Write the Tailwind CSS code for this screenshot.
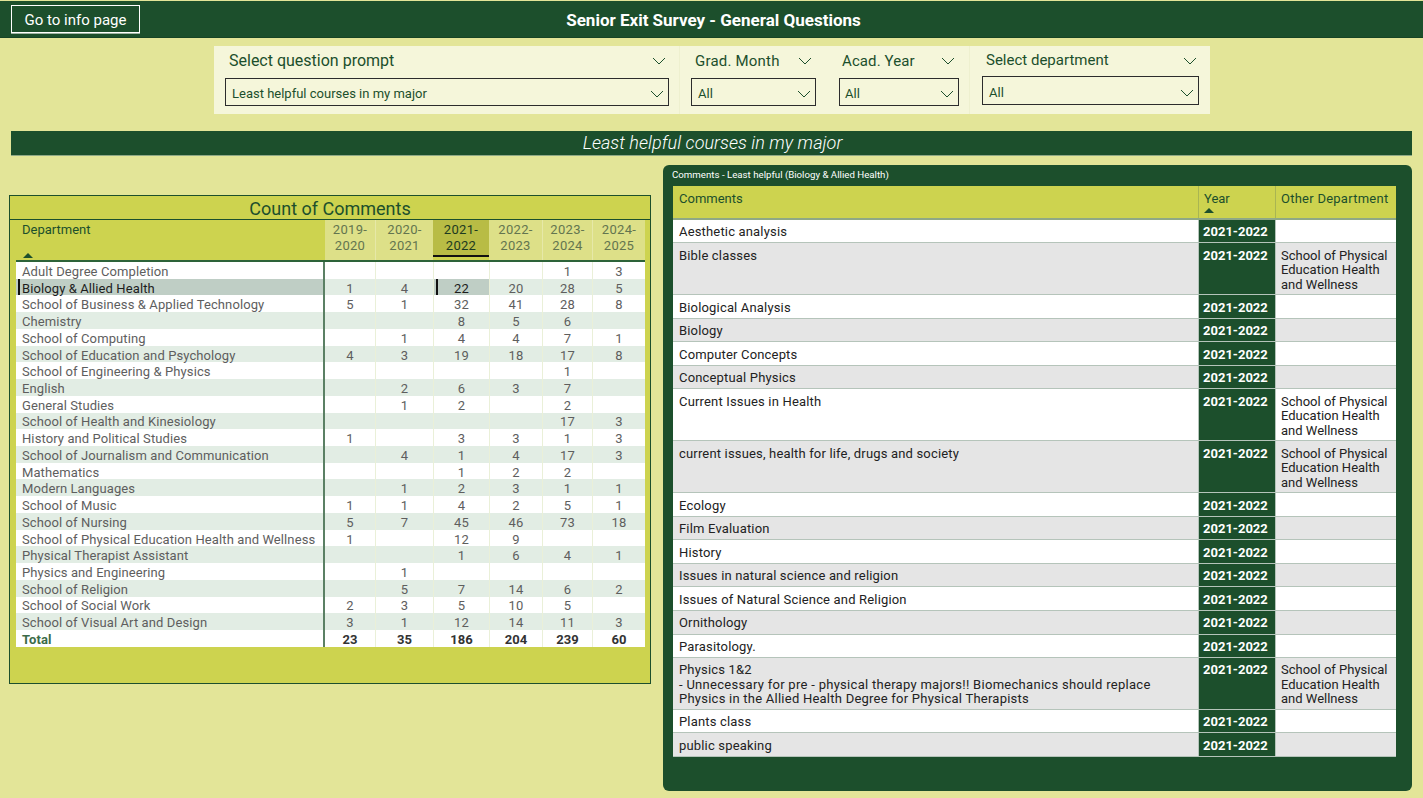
<!DOCTYPE html>
<html lang="en">
  <head>
    <meta charset="UTF-8" />
    <title>Senior Exit Survey</title>
    <script src="https://cdn.jsdelivr.net/npm/@tailwindcss/browser@4"></script>
  </head>
  <body class="h-[798px] overflow-hidden bg-[#e3e598] font-['Roboto',sans-serif] pt-px">
    <!-- Header -->
    <header class="flex h-[37px] items-center bg-[#1c4f2c] border-b border-[#174425]">
      <button class="ml-[11px] h-[28px] w-[129px] border border-white pt-[2px] text-[15px] text-white shadow-[0_1px_0_#9fb5a5]">Go to info page</button>
      <h1 class="flex-1 pr-[136px] pt-[3px] text-center text-[17px] font-bold text-white">Senior Exit Survey - General Questions</h1>
    </header>

    <!-- Slicers -->
    <section class="ml-[214px] mt-[8px] flex h-[68px] w-[996px] bg-[#f5f6da] text-[#1c4f2c]">
      <div class="w-[466px] border-r border-[#eef0cf] pl-[11px] pr-[10px] pt-[7px]">
        <div class="flex h-[16px] items-center justify-between pl-[4px] pr-[3px] text-[16px]">
          <span>Select question prompt</span>
          <svg class="h-[8px] w-[14px]" viewBox="0 0 14 8" fill="none" stroke="#1c4f2c"><path d="M1 1l6 6 6-6" /></svg>
        </div>
        <div class="mt-[9px] flex h-[28px] items-center justify-between border border-[#2c2c2c] pl-[6px] pr-[4px] pt-[3px] text-[13px]">
          <span>Least helpful courses in my major</span>
          <svg class="h-[8px] w-[14px]" viewBox="0 0 14 8" fill="none" stroke="#1c4f2c"><path d="M1 1l6 6 6-6" /></svg>
        </div>
      </div>
      <div class="w-[150px] pl-[11px] pr-[14px] pt-[7px]">
        <div class="flex h-[16px] items-center justify-between pl-[4px] pr-[4px] text-[15px] tracking-[0.2px]">
          <span>Grad. Month</span>
          <svg class="h-[8px] w-[14px]" viewBox="0 0 14 8" fill="none" stroke="#1c4f2c"><path d="M1 1l6 6 6-6" /></svg>
        </div>
        <div class="mt-[9px] flex h-[28px] items-center justify-between border border-[#2c2c2c] pl-[6px] pr-[4px] pt-[3px] text-[13px]">
          <span>All</span>
          <svg class="h-[8px] w-[14px]" viewBox="0 0 14 8" fill="none" stroke="#1c4f2c"><path d="M1 1l6 6 6-6" /></svg>
        </div>
      </div>
      <div class="w-[140px] border-r border-[#eef0cf] pl-[9px] pr-[10px] pt-[7px]">
        <div class="flex h-[16px] items-center justify-between pl-[3px] pr-[4px] text-[15px] tracking-[0.1px]">
          <span>Acad. Year</span>
          <svg class="h-[8px] w-[14px]" viewBox="0 0 14 8" fill="none" stroke="#1c4f2c"><path d="M1 1l6 6 6-6" /></svg>
        </div>
        <div class="mt-[9px] flex h-[28px] items-center justify-between border border-[#2c2c2c] pl-[5px] pr-[4px] pt-[3px] text-[13px]">
          <span>All</span>
          <svg class="h-[8px] w-[14px]" viewBox="0 0 14 8" fill="none" stroke="#1c4f2c"><path d="M1 1l6 6 6-6" /></svg>
        </div>
      </div>
      <div class="w-[240px] pl-[12px] pr-[11px] pt-[7px]">
        <div class="flex h-[15px] items-center justify-between pl-[4px] pr-[2px] text-[15px]">
          <span>Select department</span>
          <svg class="h-[8px] w-[14px]" viewBox="0 0 14 8" fill="none" stroke="#1c4f2c"><path d="M1 1l6 6 6-6" /></svg>
        </div>
        <div class="mt-[8px] flex h-[29px] items-center justify-between border border-[#2c2c2c] pl-[6px] pr-[4px] pt-[4px] text-[13px]">
          <span>All</span>
          <svg class="h-[8px] w-[14px]" viewBox="0 0 14 8" fill="none" stroke="#1c4f2c"><path d="M1 1l6 6 6-6" /></svg>
        </div>
      </div>
    </section>

    <!-- Prompt band -->
    <div class="ml-[11px] mt-[17px] flex h-[25px] w-[1401px] items-center justify-center border-b border-[#8fa886] bg-[#1c4f2c] pb-[2px] pl-[2px] text-[18px] font-light italic tracking-[0.05px] text-white">
      Least helpful courses in my major
    </div>

    <main class="ml-[9px] mt-[9px] flex items-start gap-[12px]">
      <!-- Count of comments matrix -->
      <section class="mt-[30px] h-[489px] w-[642px] border border-[#1c4f2c] bg-[#cdd34f] pl-[6px] pr-[5px]">
        <h2 class="-mx-[6px] -mr-[5px] flex h-[24px] items-center justify-center border-b border-[#1c4f2c] pt-px text-[18px] text-[#1c4f2c]">Count of Comments</h2>
        <div class="grid h-[42px] grid-cols-[309px_50px_58px_56px_53px_50px_53px] border-b-2 border-[#2d6339] text-center text-[13px] leading-[16px] tracking-[0.3px] text-[#63754f]">
          <div class="relative pl-[6px] pt-[2px] text-left tracking-normal text-[#1c4f2c]">
            Department
            <svg class="absolute bottom-[2px] left-[7px] h-[5px] w-[10px]" viewBox="0 0 10 5"><path d="M0 5L5 0l5 5z" fill="#1c4f2c" /></svg>
          </div>
          <div class="bg-[#dde088] pt-[2px]">2019-<br />2020</div>
          <div class="border-l border-[#e6e8a8] bg-[#dde088] pt-[2px]">2020-<br />2021</div>
          <div class="text-[#1c3a20]"><div class="h-[37px] border-b-2 border-[#111] bg-[#b8bc45] pt-[2px]">2021-<br />2022</div></div>
          <div class="bg-[#dde088] pt-[2px]">2022-<br />2023</div>
          <div class="border-l border-[#e6e8a8] bg-[#dde088] pt-[2px]">2023-<br />2024</div>
          <div class="border-l border-[#e6e8a8] bg-[#dde088] pt-[2px]">2024-<br />2025</div>
        </div>
        <!-- row stripes sit on the grid itself so descenders aren't painted over by the next row -->
        <div class="grid auto-rows-[16.73px] grid-cols-[309px_50px_58px_56px_53px_50px_53px] bg-[repeating-linear-gradient(#fff_0_16.73px,#e2ede4_16.73px_33.46px)] text-center text-[13px] leading-[15px] tracking-[0.1px] text-[#5e5e5e] [&>*]:h-full [&>*]:border-l [&>*]:border-[#eaf0d8] [&>*]:pt-[2px] [&>*:nth-child(7n+1)]:border-l-0 [&>*:nth-child(7n+1)]:border-r-2 [&>*:nth-child(7n+1)]:border-r-[#5b8064] [&>*:nth-child(7n+1)]:pl-[6px] [&>*:nth-child(7n+1)]:text-left [&>*:nth-child(7n+2)]:border-l-0">
          <div>Adult Degree Completion</div><div></div><div></div><div></div><div></div><div>1</div><div>3</div>
          <div class="relative bg-[#bfcec5] text-[#1d1d1d] before:absolute before:left-[2px] before:top-0 before:h-full before:w-[2px] before:bg-[#111]">Biology &amp; Allied Health</div><div>1</div><div>4</div><div class="relative bg-[#bfcec5] text-[#1d1d1d] before:absolute before:left-[2px] before:top-0 before:h-full before:w-[2px] before:bg-[#111]">22</div><div>20</div><div>28</div><div>5</div>
          <div>School of Business &amp; Applied Technology</div><div>5</div><div>1</div><div>32</div><div>41</div><div>28</div><div>8</div>
          <div>Chemistry</div><div></div><div></div><div>8</div><div>5</div><div>6</div><div></div>
          <div>School of Computing</div><div></div><div>1</div><div>4</div><div>4</div><div>7</div><div>1</div>
          <div>School of Education and Psychology</div><div>4</div><div>3</div><div>19</div><div>18</div><div>17</div><div>8</div>
          <div>School of Engineering &amp; Physics</div><div></div><div></div><div></div><div></div><div>1</div><div></div>
          <div>English</div><div></div><div>2</div><div>6</div><div>3</div><div>7</div><div></div>
          <div>General Studies</div><div></div><div>1</div><div>2</div><div></div><div>2</div><div></div>
          <div>School of Health and Kinesiology</div><div></div><div></div><div></div><div></div><div>17</div><div>3</div>
          <div>History and Political Studies</div><div>1</div><div></div><div>3</div><div>3</div><div>1</div><div>3</div>
          <div>School of Journalism and Communication</div><div></div><div>4</div><div>1</div><div>4</div><div>17</div><div>3</div>
          <div>Mathematics</div><div></div><div></div><div>1</div><div>2</div><div>2</div><div></div>
          <div>Modern Languages</div><div></div><div>1</div><div>2</div><div>3</div><div>1</div><div>1</div>
          <div>School of Music</div><div>1</div><div>1</div><div>4</div><div>2</div><div>5</div><div>1</div>
          <div>School of Nursing</div><div>5</div><div>7</div><div>45</div><div>46</div><div>73</div><div>18</div>
          <div>School of Physical Education Health and Wellness</div><div>1</div><div></div><div>12</div><div>9</div><div></div><div></div>
          <div>Physical Therapist Assistant</div><div></div><div></div><div>1</div><div>6</div><div>4</div><div>1</div>
          <div>Physics and Engineering</div><div></div><div>1</div><div></div><div></div><div></div><div></div>
          <div>School of Religion</div><div></div><div>5</div><div>7</div><div>14</div><div>6</div><div>2</div>
          <div>School of Social Work</div><div>2</div><div>3</div><div>5</div><div>10</div><div>5</div><div></div>
          <div>School of Visual Art and Design</div><div>3</div><div>1</div><div>12</div><div>14</div><div>11</div><div>3</div>
          <div class="font-bold text-[#3c6b48]">Total</div><div class="font-bold text-[#333]">23</div><div class="font-bold text-[#333]">35</div><div class="font-bold text-[#333]">186</div><div class="font-bold text-[#333]">204</div><div class="font-bold text-[#333]">239</div><div class="font-bold text-[#333]">60</div>
        </div>
      </section>

      <!-- Comments table -->
      <section class="h-[626px] w-[749px] rounded-md bg-[#1c4f2c] pl-[10px] pr-[16px] pt-[3px]">
        <h2 class="-ml-px h-[18px] text-[9.7px] leading-[14px] text-white">Comments - Least helpful (Biology &amp; Allied Health)</h2>
        <div class="grid h-[33.5px] grid-cols-[525px_78px_120px] border-b-2 border-[#8fa886] bg-[#cdd34f] text-[13px] leading-[16px] text-[#1c4f2c]">
          <div class="pl-[6px] pt-[5px]">Comments</div>
          <div class="relative border-x border-[#a9b552] pl-[5px] pt-[5px]">
            Year
            <svg class="absolute bottom-[5px] left-[5px] h-[5px] w-[10px]" viewBox="0 0 10 5"><path d="M0 5L5 0l5 5z" fill="#1c4f2c" /></svg>
          </div>
          <div class="pl-[5px] pt-[5px] whitespace-nowrap tracking-[0.25px]">Other Department</div>
        </div>
        <div class="grid grid-cols-[525px_78px_120px] text-[13px] leading-[14.6px] text-[#222] [&>*]:border-b [&>*]:border-[#b5c4ba] [&>*]:pl-[6px] [&>*]:pt-[5.47px] [&>*:nth-child(3n+1)]:tracking-[0.17px] [&>*:nth-child(3n+2)]:border-x [&>*:nth-child(3n+2)]:border-[#b5c4ba] [&>*:nth-child(3n+2)]:bg-[#1c4f2c] [&>*:nth-child(3n+2)]:pl-[4px] [&>*:nth-child(3n+2)]:font-bold [&>*:nth-child(3n+2)]:text-white [&>*:nth-child(3n)]:pl-[5px]">
          <div class="h-[23.55px] bg-white">Aesthetic analysis</div><div>2021-2022</div><div class="bg-white"></div>
          <div class="h-[52px] bg-[#e5e5e5]">Bible classes</div><div>2021-2022</div><div class="bg-[#e5e5e5]">School of Physical Education Health and Wellness</div>
          <div class="h-[23.55px] bg-white">Biological Analysis</div><div>2021-2022</div><div class="bg-white"></div>
          <div class="h-[23.55px] bg-[#e5e5e5]">Biology</div><div>2021-2022</div><div class="bg-[#e5e5e5]"></div>
          <div class="h-[23.55px] bg-white">Computer Concepts</div><div>2021-2022</div><div class="bg-white"></div>
          <div class="h-[23.55px] bg-[#e5e5e5]">Conceptual Physics</div><div>2021-2022</div><div class="bg-[#e5e5e5]"></div>
          <div class="h-[52px] bg-white">Current Issues in Health</div><div>2021-2022</div><div class="bg-white">School of Physical Education Health and Wellness</div>
          <div class="h-[52px] bg-[#e5e5e5]">current issues, health for life, drugs and society</div><div>2021-2022</div><div class="bg-[#e5e5e5]">School of Physical Education Health and Wellness</div>
          <div class="h-[23.55px] bg-white">Ecology</div><div>2021-2022</div><div class="bg-white"></div>
          <div class="h-[23.55px] bg-[#e5e5e5]">Film Evaluation</div><div>2021-2022</div><div class="bg-[#e5e5e5]"></div>
          <div class="h-[23.55px] bg-white">History</div><div>2021-2022</div><div class="bg-white"></div>
          <div class="h-[23.55px] bg-[#e5e5e5]">Issues in natural science and religion</div><div>2021-2022</div><div class="bg-[#e5e5e5]"></div>
          <div class="h-[23.55px] bg-white">Issues of Natural Science and Religion</div><div>2021-2022</div><div class="bg-white"></div>
          <div class="h-[23.55px] bg-[#e5e5e5]">Ornithology</div><div>2021-2022</div><div class="bg-[#e5e5e5]"></div>
          <div class="h-[23.1px] bg-white">Parasitology.</div><div>2021-2022</div><div class="bg-white"></div>
          <div class="h-[52px] bg-[#e5e5e5]">Physics 1&amp;2<br /><span class="tracking-[0.29px]">- Unnecessary for pre - physical therapy majors!! Biomechanics should replace</span><br /><span class="tracking-[0.24px]">Physics in the Allied Health Degree for Physical Therapists</span></div><div>2021-2022</div><div class="bg-[#e5e5e5]">School of Physical Education Health and Wellness</div>
          <div class="h-[23.55px] bg-white">Plants class</div><div>2021-2022</div><div class="bg-white"></div>
          <div class="h-[23.55px] bg-[#e5e5e5]">public speaking</div><div>2021-2022</div><div class="bg-[#e5e5e5]"></div>
        </div>
      </section>
    </main>
  </body>
</html>
